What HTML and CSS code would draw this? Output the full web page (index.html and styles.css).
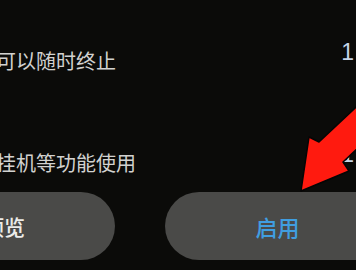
FILE: index.html
```html
<!DOCTYPE html>
<html lang="zh">
<head>
<meta charset="utf-8">
<link rel="stylesheet" href="styles.css">
</head>
<body>
<div class="screen">
  <div class="row row-first">
    <span class="label">可以随时终止</span>
    <span class="value">1</span>
  </div>
  <div class="row row-second">
    <span class="label">挂机等功能使用</span>
    <span class="value">1</span>
  </div>
  <div class="actions">
    <div class="btn btn-preview">预览</div>
    <div class="btn btn-enable">启用</div>
  </div>
  <svg class="arrow" width="356" height="270" viewBox="0 0 356 270">
    <polygon points="372,92 319,142 309,137 301,191 349,171 343,162 372,135" fill="#ff1a0f" stroke="#050505" stroke-width="1.5" stroke-linejoin="round"/>
  </svg>
</div>
</body>
</html>
```

FILE: styles.css
```css
html, body {
  margin: 0;
  padding: 0;
  background: #0b0b09;
}
.screen {
  position: relative;
  width: 356px;
  height: 270px;
  overflow: hidden;
  background: #0b0b09;
  font-family: "Noto Sans CJK SC", "Noto Sans", sans-serif;
  display: flex;
  flex-direction: column;
}
.row {
  display: flex;
  justify-content: space-between;
  align-items: center;
  height: 26px;
  padding-right: 2px;
}
.row-first {
  margin-top: 47px;
}
.row-second {
  margin-top: 76px;
}
.label {
  margin-left: -4px;
  font-size: 20px;
  color: #d2d2d0;
}
.value {
  font-family: "Liberation Sans", sans-serif;
  font-size: 23px;
  color: #c6d5e8;
  margin-bottom: 16px;
}
.actions {
  display: flex;
  gap: 50px;
  margin-top: 17px;
  margin-left: -107px;
}
.btn {
  flex: none;
  width: 222px;
  height: 68px;
  border-radius: 34px;
  background: #4a4a48;
  display: flex;
  align-items: center;
  justify-content: center;
  font-size: 21px;
  font-weight: 500;
}
.btn-preview {
  color: #ececea;
}
.btn-enable {
  width: 225px;
  font-size: 22px;
  color: #409ee0;
}
.arrow {
  position: absolute;
  left: 0;
  top: 0;
}
```
